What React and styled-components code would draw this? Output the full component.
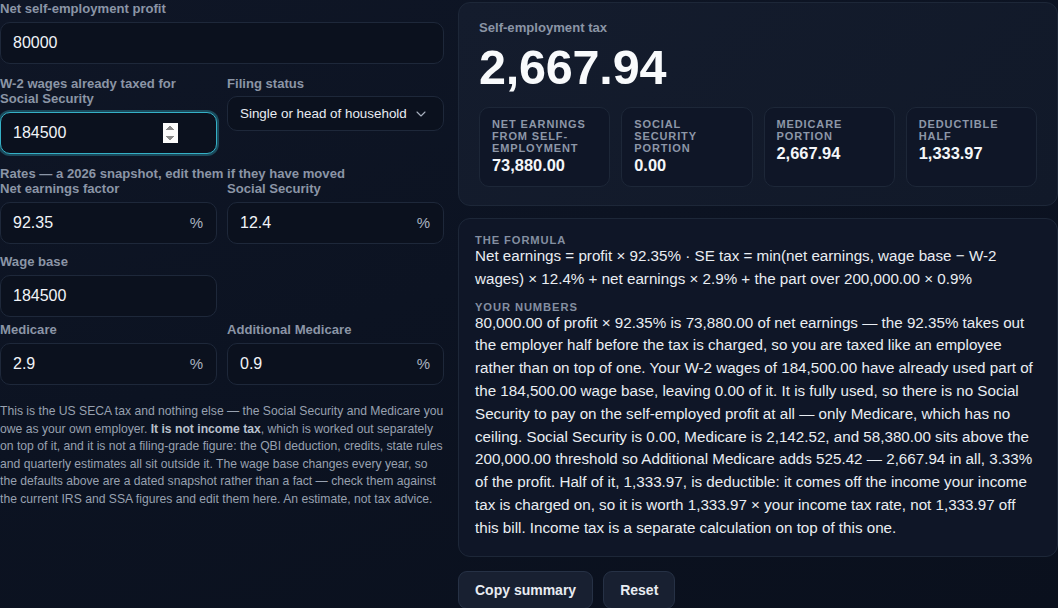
import React, { useState } from "react";
import styled, { createGlobalStyle } from "styled-components";
import { ChevronDown } from "lucide-react";

const GlobalStyle = createGlobalStyle`
  html, body {
    margin: 0;
    padding: 0;
    background: #0c1322;
  }
  body {
    font-family: "Liberation Sans", Arial, sans-serif;
    color: #e5e9f0;
    background: linear-gradient(160deg, #0f1626 0%, #0c1322 45%, #0a101d 100%);
    min-height: 608px;
  }
  * { box-sizing: border-box; }
`;

const Page = styled.div`
  display: grid;
  grid-template-columns: 444px 1fr;
  gap: 14px;
  width: 1058px;
  padding-top: 1px;
  align-items: start;
`;

const Column = styled.div`
  display: flex;
  flex-direction: column;
  gap: ${(p) => p.gap ?? 12}px;
`;

const Field = styled.div`
  display: flex;
  flex-direction: column;
  gap: ${(p) => p.gap ?? 6}px;
`;

const Label = styled.label`
  font-size: 13.1px;
  line-height: 15px;
  font-weight: 700;
  color: #8b95a6;
  padding-right: 6px;
`;

const Row = styled.div`
  display: grid;
  grid-template-columns: 217px 217px;
  gap: 10px;
  align-items: start;
  margin-top: ${(p) => p.shift || 0}px;
`;

const Section = styled.div`
  display: flex;
  flex-direction: column;
`;

const SectionHead = styled.div`
  font-size: 13.1px;
  line-height: 15px;
  font-weight: 700;
  color: #8b95a6;
`;

const InputBox = styled.div`
  position: relative;
  display: flex;
  align-items: center;
  height: ${(p) => (p.small ? 35 : 42)}px;
  border-radius: 10px;
  border: 1px solid ${(p) => (p.focused ? "#35b0c6" : "#1e283a")};
  background: #0b111e;
  box-shadow: ${(p) => (p.focused ? "0 0 0 2px rgba(44, 140, 160, 0.45)" : "none")};
`;

const Input = styled.input`
  flex: 1;
  min-width: 0;
  height: 100%;
  border: none;
  outline: none;
  background: transparent;
  color: #f1f4f8;
  font-family: "Liberation Sans", Arial, sans-serif;
  font-size: 16px;
  padding: 0 12px;
  &::-webkit-inner-spin-button {
    opacity: ${(p) => (p.spin ? 1 : 0)};
    margin-right: 26px;
    height: 20px;
  }
`;

const Suffix = styled.span`
  padding-right: 13px;
  font-size: 15px;
  line-height: 16px;
  color: #a9b2c0;
`;

const Select = styled.select`
  appearance: none;
  width: 100%;
  height: 100%;
  border: none;
  outline: none;
  background: transparent;
  color: #e8ecf2;
  font-family: "Liberation Sans", Arial, sans-serif;
  font-size: 13.4px;
  padding: 0 30px 0 12px;
`;

const Chevron = styled(ChevronDown)`
  position: absolute;
  right: 14px;
  top: 50%;
  transform: translateY(-50%);
  color: #a9b2c0;
  pointer-events: none;
`;

const Note = styled.p`
  margin: 6px 0 0;
  font-size: 12.16px;
  line-height: 17.6px;
  color: #98a1b0;
  b {
    color: #b9c1cd;
  }
`;

const Card = styled.div`
  border: 1px solid #1d2738;
  border-radius: 12px;
  background: ${(p) => (p.raised ? "linear-gradient(135deg, #141c2d, #111929)" : "#0f1627")};
  padding: ${(p) => p.pad};
  margin-top: ${(p) => p.top || 0}px;
`;

const Eyebrow = styled.div`
  font-size: 13.1px;
  line-height: 15px;
  font-weight: 700;
  color: #8b95a6;
`;

const BigNumber = styled.div`
  font-size: 48.5px;
  line-height: 56px;
  font-weight: 700;
  color: #f8fafc;
  margin-top: 4px;
  letter-spacing: -0.2px;
`;

const Stats = styled.div`
  display: grid;
  grid-template-columns: repeat(4, 1fr);
  gap: 11px;
  margin-top: 12px;
`;

const Stat = styled.div`
  border: 1px solid #1d2738;
  border-radius: 10px;
  background: #0f1627;
  padding: 10px 12px 10px;
  min-height: 79px;
`;

const StatLabel = styled.div`
  font-size: 11px;
  line-height: 12px;
  font-weight: 700;
  letter-spacing: 0.08em;
  text-transform: uppercase;
  color: #8d97a8;
`;

const StatValue = styled.div`
  font-size: 16.4px;
  line-height: 21px;
  font-weight: 700;
  color: #f4f6f9;
  margin-top: 1px;
`;

const Kicker = styled.div`
  font-size: 11.2px;
  line-height: 12px;
  font-weight: 700;
  letter-spacing: 0.08em;
  text-transform: uppercase;
  color: #848fa1;
  margin-top: ${(p) => (p.first ? 0 : 10)}px;
  margin-bottom: -1px;
`;

const Body = styled.p`
  margin: 0;
  font-size: 15.2px;
  line-height: 22.8px;
  color: #e9edf2;
`;

const Actions = styled.div`
  display: flex;
  gap: 10px;
  margin-top: 14px;
`;

const Button = styled.button`
  font-family: "Liberation Sans", Arial, sans-serif;
  font-size: 14px;
  font-weight: 700;
  color: #e8ecf2;
  background: #182031;
  border: 1px solid #263145;
  border-radius: 9px;
  padding: 0 16px;
  height: 38px;
  cursor: pointer;
`;

const RateField = ({ label, value, suffix, onChange }) => (
  <Field>
    <Label>{label}</Label>
    <InputBox>
      <Input type="text" value={value} onChange={(e) => onChange(e.target.value)} />
      {suffix && <Suffix>{suffix}</Suffix>}
    </InputBox>
  </Field>
);

export default function App() {
  const [profit, setProfit] = useState("80000");
  const [wages, setWages] = useState("184500");
  const [status, setStatus] = useState("single");
  const [factor, setFactor] = useState("92.35");
  const [ss, setSs] = useState("12.4");
  const [base, setBase] = useState("184500");
  const [medicare, setMedicare] = useState("2.9");
  const [extra, setExtra] = useState("0.9");

  const stats = [
    { label: "Net earnings from self-employment", value: "73,880.00" },
    { label: "Social Security portion", value: "0.00" },
    { label: "Medicare portion", value: "2,667.94" },
    { label: "Deductible half", value: "1,333.97" },
  ];

  return (
    <>
      <GlobalStyle />
      <Page>
        <Column>
          <Field>
            <Label>Net self-employment profit</Label>
            <InputBox>
              <Input type="text" value={profit} onChange={(e) => setProfit(e.target.value)} />
            </InputBox>
          </Field>

          <Row>
            <Field>
              <Label>W-2 wages already taxed for Social Security</Label>
              <InputBox focused>
                <Input
                  type="number"
                  spin
                  autoFocus
                  value={wages}
                  onChange={(e) => setWages(e.target.value)}
                />
              </InputBox>
            </Field>
            <Field gap={5}>
              <Label>Filing status</Label>
              <InputBox small>
                <Select value={status} onChange={(e) => setStatus(e.target.value)}>
                  <option value="single">Single or head of household</option>
                  <option value="joint">Married filing jointly</option>
                  <option value="separate">Married filing separately</option>
                </Select>
                <Chevron size={16} strokeWidth={1.6} />
              </InputBox>
            </Field>
          </Row>

          <Section>
            <SectionHead>Rates — a 2026 snapshot, edit them if they have moved</SectionHead>
            <Row>
              <RateField label="Net earnings factor" value={factor} suffix="%" onChange={setFactor} />
              <RateField label="Social Security" value={ss} suffix="%" onChange={setSs} />
            </Row>
            <Row shift={10}>
              <RateField label="Wage base" value={base} onChange={setBase} />
            </Row>
            <Row shift={5}>
              <RateField label="Medicare" value={medicare} suffix="%" onChange={setMedicare} />
              <RateField label="Additional Medicare" value={extra} suffix="%" onChange={setExtra} />
            </Row>
          </Section>

          <Note>
            This is the US SECA tax and nothing else — the Social Security and Medicare you
            owe as your own employer. <b>It is not income tax</b>, which is worked out
            separately on top of it, and it is not a filing-grade figure: the QBI deduction,
            credits, state rules and quarterly estimates all sit outside it. The wage base
            changes every year, so the defaults above are a dated snapshot rather than a fact
            — check them against the current IRS and SSA figures and edit them here. An
            estimate, not tax advice.
          </Note>
        </Column>

        <Column gap={12}>
          <Card raised pad="17px 20px 18px" top={1}>
            <Eyebrow>Self-employment tax</Eyebrow>
            <BigNumber>2,667.94</BigNumber>
            <Stats>
              {stats.map((s) => (
                <Stat key={s.label}>
                  <StatLabel>{s.label}</StatLabel>
                  <StatValue>{s.value}</StatValue>
                </Stat>
              ))}
            </Stats>
          </Card>

          <div>
            <Card pad="15px 17px 16px 16px">
              <Kicker first>The formula</Kicker>
              <Body>
                Net earnings = profit × 92.35% · SE tax = min(net earnings, wage base − W-2
                wages) × 12.4% + net earnings × 2.9% + the part over 200,000.00 × 0.9%
              </Body>
              <Kicker>Your numbers</Kicker>
              <Body>
                80,000.00 of profit × 92.35% is 73,880.00 of net earnings — the 92.35% takes
                out the employer half before the tax is charged, so you are taxed like an
                employee rather than on top of one. Your W-2 wages of 184,500.00 have already
                used part of the 184,500.00 wage base, leaving 0.00 of it. It is fully used, so
                there is no Social Security to pay on the self-employed profit at all — only
                Medicare, which has no ceiling. Social Security is 0.00, Medicare is 2,142.52,
                and 58,380.00 sits above the 200,000.00 threshold so Additional Medicare adds
                525.42 — 2,667.94 in all, 3.33% of the profit. Half of it, 1,333.97, is
                deductible: it comes off the income your income tax is charged on, so it is
                worth 1,333.97 × your income tax rate, not 1,333.97 off this bill. Income tax
                is a separate calculation on top of this one.
              </Body>
            </Card>
            <Actions>
              <Button>Copy summary</Button>
              <Button>Reset</Button>
            </Actions>
          </div>
        </Column>
      </Page>
    </>
  );
}
